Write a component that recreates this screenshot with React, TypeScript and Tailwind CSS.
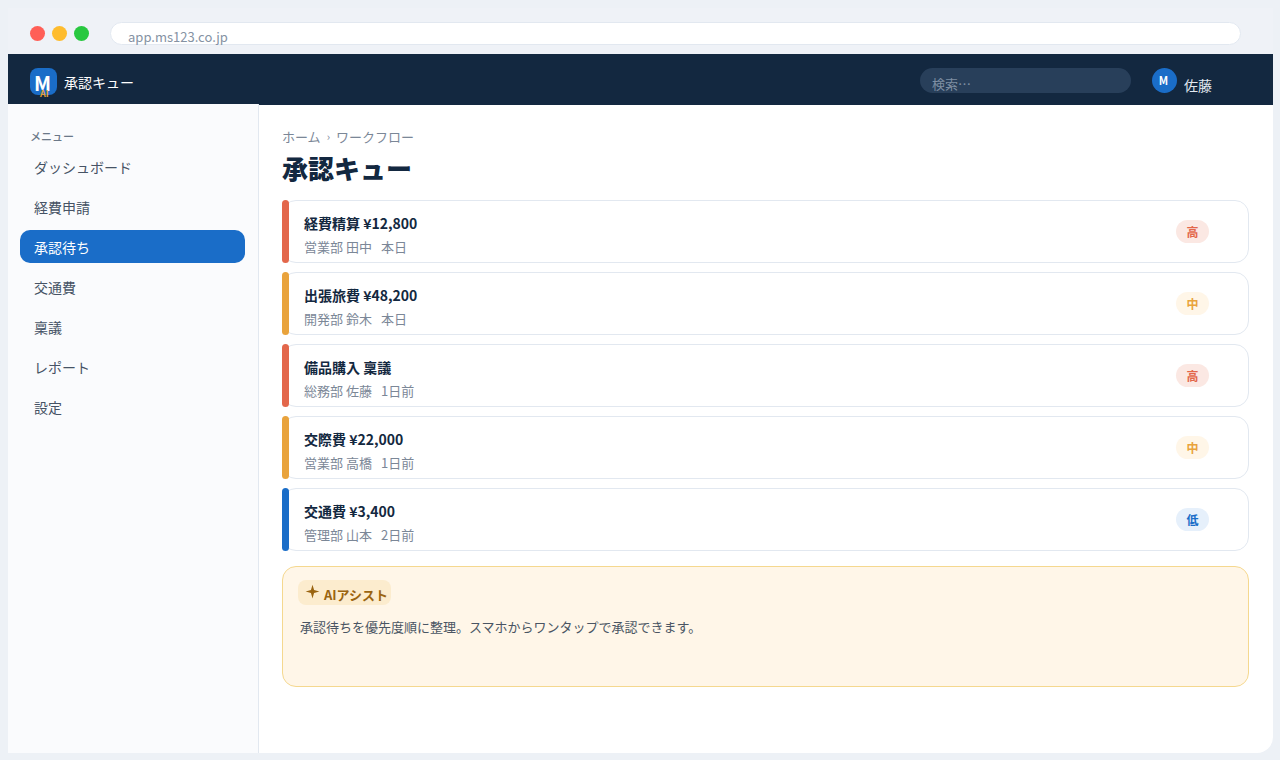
import React from 'react';

const font = { fontFamily: '"Noto Sans CJK JP", "Noto Sans", sans-serif' };

const navItems = ['ダッシュボード', '経費申請', '承認待ち', '交通費', '稟議', 'レポート', '設定'];

const queue = [
  { title: '経費精算 ¥12,800', dept: '営業部 田中', when: '本日', level: '高' },
  { title: '出張旅費 ¥48,200', dept: '開発部 鈴木', when: '本日', level: '中' },
  { title: '備品購入 稟議', dept: '総務部 佐藤', when: '1日前', level: '高' },
  { title: '交際費 ¥22,000', dept: '営業部 高橋', when: '1日前', level: '中' },
  { title: '交通費 ¥3,400', dept: '管理部 山本', when: '2日前', level: '低' },
];

const barColor: Record<string, string> = {
  高: 'bg-[#e3674b]',
  中: 'bg-[#e9a33c]',
  低: 'bg-[#1a6dc8]',
};

const badgeColor: Record<string, string> = {
  高: 'bg-[#fbe8e3] text-[#e3674b]',
  中: 'bg-[#fff6e8] text-[#e9a33c]',
  低: 'bg-[#e6f0fb] text-[#1a6dc8]',
};

export default function App() {
  return (
    <div className="w-[1280px] h-[760px] overflow-hidden bg-[#edf1f6] pl-2 pt-2" style={font}>
      <div className="w-[1265px] h-[745px] flex flex-col bg-white rounded-br-[16px] overflow-hidden">
        {/* browser chrome */}
        <div className="h-[46px] shrink-0 bg-[#eff2f7] flex items-start pl-[22px] pt-[14px]">
          <div className="flex gap-[7px] pt-[4px]">
            <div className="w-[15px] h-[15px] rounded-full bg-[#ff5f57]"></div>
            <div className="w-[15px] h-[15px] rounded-full bg-[#febc2e]"></div>
            <div className="w-[15px] h-[15px] rounded-full bg-[#28c840]"></div>
          </div>
          <div className="ml-[21px] w-[1131px] h-[23px] rounded-full bg-white border border-[#e2e8f0] pl-[17px] text-[13px] leading-[27px] text-[#8592a3]">
            app.ms123.co.jp
          </div>
        </div>

        {/* app header */}
        <div className="h-[51px] shrink-0 bg-[#132840] flex items-start pl-[22px] pt-[14px]">
          <div className="relative w-[27px] h-[27px] rounded-[8px] bg-[#1a6dc8] pr-[2px] text-white text-center font-bold text-[20px] leading-[30px]">
            M
            <span className="absolute left-[10px] top-[21px] text-[9px] leading-[10px] font-bold text-[#e8a033]">AI</span>
          </div>
          <div className="ml-[7px] text-[14px] leading-[29px] text-white">承認キュー</div>
          <div className="ml-[786px] w-[211px] h-[25px] rounded-full bg-[#283f5a] pl-[12px] text-[13px] leading-[31px] text-[#7f8fa3]">
            検索…
          </div>
          <div className="ml-[21px] w-[25px] h-[25px] rounded-full bg-[#1a6dc8] pr-[2px] text-white text-center font-bold text-[11px] leading-[25px]">M</div>
          <div className="ml-[7px] text-[14px] leading-[34px] text-[#e2e8f0]">佐藤</div>
        </div>

        <div className="flex-1 flex min-h-0">
          {/* sidebar */}
          <div className="relative -mt-px w-[251px] shrink-0 bg-[#fafbfd] border-r border-[#e2e8f0] pl-3 pr-[13px] pt-[24px]">
            <div className="pl-[10px] text-[11px] leading-[16px] font-medium text-[#6b7888]">メニュー</div>
            <div className="mt-[6px] flex flex-col gap-[7px]">
              {navItems.map((item) =>
                item === '承認待ち' ? (
                  <div key={item} className="h-[33px] rounded-[10px] bg-[#1a6dc8] pl-[14px] text-[14px] leading-[35px] text-white">
                    {item}
                  </div>
                ) : (
                  <div key={item} className="h-[33px] pl-[14px] text-[14px] leading-[35px] text-[#465365]">
                    {item}
                  </div>
                ),
              )}
            </div>
          </div>

          {/* main */}
          <div className="flex-1 pl-[23px] pr-[24px] pt-[22px]">
            <div className="flex items-center text-[13px] leading-[19px] text-[#7b8797]">
              <span>ホーム</span>
              <span className="mx-[6px] text-[11px]">›</span>
              <span>ワークフロー</span>
            </div>
            <h1 className="mt-[3px] text-[26px] leading-[38px] font-black text-[#132840]">承認キュー</h1>

            <div className="mt-[13px] flex flex-col gap-[9px]">
              {queue.map((row) => (
                <div key={row.title} className="relative h-[63px] rounded-[14px] bg-white border border-[#e2e8f0] flex items-start justify-between pl-[21px] pr-[39px]">
                  <div className={`absolute -left-px -top-px -bottom-px w-[7px] rounded-[4px] ${barColor[row.level]}`}></div>
                  <div>
                    <div className="mt-[12px] text-[14px] leading-[21px] font-bold text-[#132840]">{row.title}</div>
                    <div className="mt-[3px] flex gap-[9px] text-[13px] leading-[20px] text-[#7b8797]">
                      <span>{row.dept}</span>
                      <span>{row.when}</span>
                    </div>
                  </div>
                  <div className={`mt-[19px] w-[33px] h-[23px] rounded-full text-center text-[12px] font-bold leading-[24px] ${badgeColor[row.level]}`}>
                    {row.level}
                  </div>
                </div>
              ))}
            </div>

            <div className="mt-[15px] h-[121px] rounded-[14px] bg-[#fff6e8] border border-[#f5d88f] pl-[15px] pt-[13px]">
              <div className="w-[93px] h-[25px] rounded-[8px] bg-[#fcecce] flex items-center pl-[7px] text-[13px] font-bold text-[#9a6410]">
                <svg width="15" height="15" viewBox="0 0 24 24" className="shrink-0 -mt-[3px]">
                  <path d="M12 1 L14.5 9.5 L23 12 L14.5 14.5 L12 23 L9.5 14.5 L1 12 L9.5 9.5 Z" fill="#9a6410" />
                </svg>
                <span className="ml-[4px] leading-[25px] mt-[3px]">AIアシスト</span>
              </div>
              <p className="mt-[12px] pl-[2px] text-[13px] leading-[20px] text-[#4a5563]">承認待ちを優先度順に整理。スマホからワンタップで承認できます。</p>
            </div>
          </div>
        </div>
      </div>
    </div>
  );
}
